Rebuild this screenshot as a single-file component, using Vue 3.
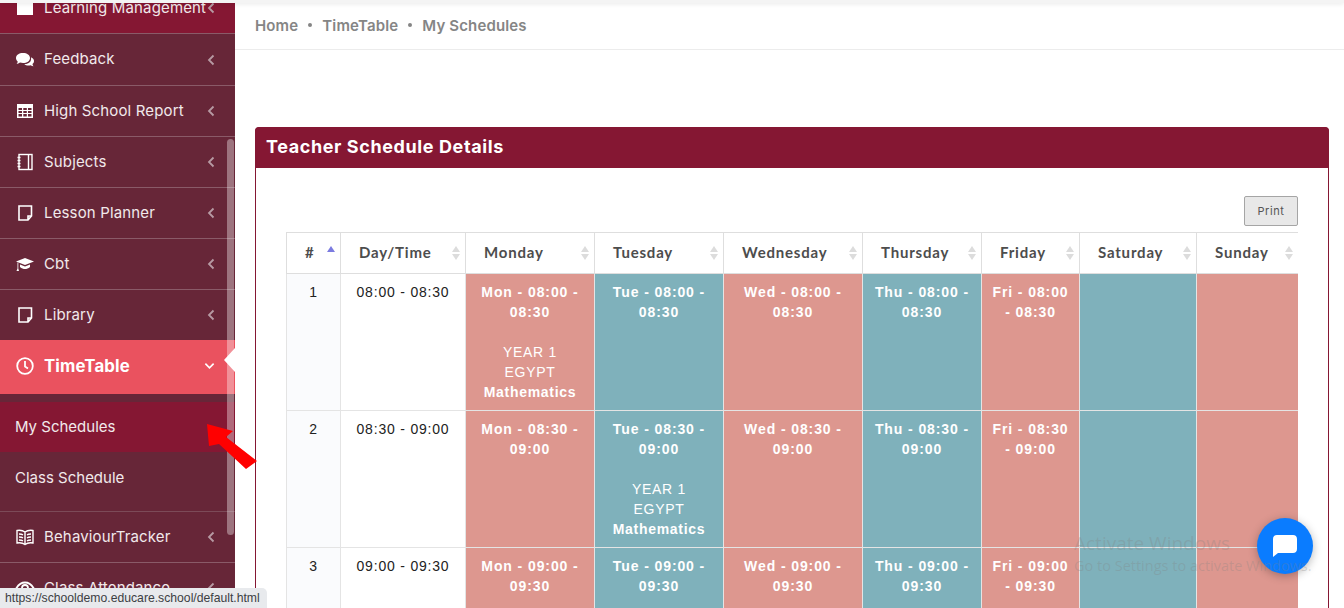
<script setup>
const menuTop = [
  { label: 'Learning Management', icon: 'square', cls: 'first' },
  { label: 'Feedback', icon: 'comments', cls: 'tall' },
  { label: 'High School Report', icon: 'table' },
  { label: 'Subjects', icon: 'notebook' },
  { label: 'Lesson Planner', icon: 'note' },
  { label: 'Cbt', icon: 'cap' },
  { label: 'Library', icon: 'note', cls: 'last' }
]
const menuBottom = [
  { label: 'BehaviourTracker', icon: 'book' },
  { label: 'Class Attendance', icon: 'eye' }
]
const days = ['Monday', 'Tuesday', 'Wednesday', 'Thursday', 'Friday', 'Saturday', 'Sunday']
const shortDays = ['Mon', 'Tue', 'Wed', 'Thu', 'Fri']
const rows = [
  { n: 1, time: '08:00 - 08:30', lesson: 0 },
  { n: 2, time: '08:30 - 09:00', lesson: 1 },
  { n: 3, time: '09:00 - 09:30', lesson: -1 }
]
</script>

<template>
  <div class="page">
    <div class="topbar"></div>
    <div class="layout">
      <aside class="sidebar">
        <ul class="menu">
          <li v-for="m in menuTop" :key="m.label" class="item" :class="m.cls">
            <svg class="ico" viewBox="0 0 20 20" fill="currentColor">
              <rect v-if="m.icon === 'square'" x="2" y="3" width="16" height="14" />
              <g v-else-if="m.icon === 'comments'">
                <path d="M8 3c4 0 7 2 7 5s-3 5-7 5c-1 0-2 0-3-.4C4 13.500 2.500 14 1.500 14c.7-.7 1.200-1.700 1.200-2.600C1.500 10.500 1 9.300 1 8c0-3 3-5 7-5z" />
                <path d="M16.500 7.500c1.600.8 2.500 2 2.500 3.500 0 1.200-.5 2.200-1.500 3 0 .9.400 1.600 1 2.300-1 0-2-.4-2.800-1-2.500.7-5 .2-6.400-1.300 4 .3 7.500-2 6.700-6.500z" />
              </g>
              <path v-else-if="m.icon === 'table'" fill-rule="evenodd" d="M2 3h16v14H2zM3.500 7v2h3.500V7zm4.800 0v2h3.500V7zm4.700 0v2h3.500V7zM3.500 10v2h3.500v-2zm4.800 0v2h3.500v-2zm4.700 0v2h3.500v-2zM3.500 13v2.500h3.500V13zm4.800 0v2.500h3.500V13zm4.700 0v2.500h3.500V13z" />
              <g v-else-if="m.icon === 'notebook'" fill="none" stroke="currentColor" stroke-width="1.400">
                <rect x="4" y="2.500" width="13" height="15" />
                <path d="M13.500 2.500v15M2.500 5.500h3M2.500 8.500h3M2.500 11.500h3M2.500 14.500h3" />
              </g>
              <path v-else-if="m.icon === 'note'" fill="none" stroke="currentColor" stroke-width="1.600" d="M4 3h12.500v10L13 17H4zM16 13h-3v3.500" />
              <g v-else-if="m.icon === 'cap'">
                <path d="M10 4 1 7.500l9 3.500 9-3.500z" />
                <path d="M5 10.500V13c1.500 1.500 3.500 2 5 2s3.500-.5 5-2v-2.500L10 12.500z" />
                <path d="M2.500 8.500v6L1.500 17h2.500l-.7-2.500v-6z" />
              </g>
            </svg>
            <span class="label">{{ m.label }}</span>
            <svg class="chev" viewBox="0 0 8 12"><path d="M6.500 1.500 2 6l4.500 4.500" /></svg>
          </li>
          <li class="item active">
            <svg class="ico" viewBox="0 0 20 20" fill="none" stroke="currentColor" stroke-width="1.800">
              <circle cx="10" cy="10" r="7.800" />
              <path d="M10 5v5.500l3 2" />
            </svg>
            <span class="label">TimeTable</span>
            <svg class="chev down" viewBox="0 0 12 8"><path d="M1.500 1.500 6 6l4.500-4.500" /></svg>
          </li>
          <li class="submenu">
            <div class="subitem current">My Schedules</div>
            <div class="subitem">Class Schedule</div>
          </li>
          <li v-for="m in menuBottom" :key="m.label" class="item">
            <svg class="ico" viewBox="0 0 20 20">
              <g v-if="m.icon === 'book'" fill="none" stroke="currentColor" stroke-width="1.400">
                <path d="M10 5C8 3.500 5 3 2 3.500v12.500c3-.5 6 0 8 1.500 2-1.500 5-2 8-1.500V3.500C15 3 12 3.500 10 5zM10 5v12.500" />
                <path d="M4 7c1.500 0 3 .2 4 .8M4 10c1.500 0 3 .2 4 .8M4 13c1.500 0 3 .2 4 .8M16 7c-1.500 0-3 .2-4 .8M16 10c-1.500 0-3 .2-4 .8M16 13c-1.500 0-3 .2-4 .8" />
              </g>
              <g v-else fill="none" stroke="currentColor" stroke-width="1.800">
                <path d="M1.500 10C4 6 7 4.500 10 4.500s6 1.500 8.500 5.500c-2.500 4-5.500 5.500-8.500 5.500S4 14 1.500 10z" />
                <circle cx="10" cy="10" r="3" />
              </g>
            </svg>
            <span class="label">{{ m.label }}</span>
            <svg class="chev" viewBox="0 0 8 12"><path d="M6.500 1.500 2 6l4.500 4.500" /></svg>
          </li>
        </ul>
        <div class="scrollbar"></div>
        <div class="notch"></div>
      </aside>

      <main class="main">
        <nav class="crumbs">
          <span>Home</span><i></i><span>TimeTable</span><i></i><span>My Schedules</span>
        </nav>
        <section class="card">
          <h2 class="card-title">Teacher Schedule Details</h2>
          <div class="card-body">
            <div class="tools"><button class="print">Print</button></div>
            <table class="schedule">
              <thead>
                <tr>
                  <th>#<span class="sort asc"></span></th>
                  <th>Day/Time<span class="sort"></span></th>
                  <th v-for="d in days" :key="d">{{ d }}<span class="sort"></span></th>
                </tr>
              </thead>
              <tbody>
                <tr v-for="r in rows" :key="r.n">
                  <td class="idx">{{ r.n }}</td>
                  <td class="time">{{ r.time }}</td>
                  <td v-for="(d, i) in days" :key="d" class="slot" :class="i % 2 ? 'teal' : 'rose'">
                    <template v-if="i < 5">
                      <b class="slot-time">{{ shortDays[i] }} - {{ r.time }}</b>
                      <div v-if="r.lesson === i" class="lesson">
                        YEAR 1<br />EGYPT<br /><b>Mathematics</b>
                      </div>
                    </template>
                  </td>
                </tr>
              </tbody>
            </table>
          </div>
        </section>
      </main>
    </div>

    <svg class="arrow" viewBox="0 0 54 50" width="54" height="50">
      <path fill="#f00" d="M2 2 28 9 21 15 52 39 41 47 14 22 4 24z" />
    </svg>
    <div class="activate">
      <div class="a1">Activate Windows</div>
      <div class="a2">Go to Settings to activate Windows.</div>
    </div>
    <div class="chat">
      <svg viewBox="0 0 28 28" width="28" height="28">
        <path fill="#fff" d="M6 3h16c2.500 0 4 1.500 4 4v10c0 2.500-1.500 4-4 4H7l-5 4V7c0-2.500 1.500-4 4-4z" />
      </svg>
    </div>
    <div class="status">https://schooldemo.educare.school/default.html</div>
  </div>
</template>

<style>
html, body {
  margin: 0;
  overflow: hidden;
  background: #fff;
}
</style>

<style scoped>
.page {
  position: relative;
  width: 1344px;
  height: 608px;
  overflow: hidden;
  font-family: "Liberation Sans", Arial, sans-serif;
  background: #fff;
}
.topbar {
  position: absolute;
  top: 0;
  left: 0;
  right: 0;
  height: 3px;
  background: #f4f4f4;
  box-shadow: 0 1px 4px rgba(0, 0, 0, .1);
  z-index: 5;
}
.layout {
  display: flex;
  height: 608px;
}

/* sidebar */
.sidebar {
  position: relative;
  width: 235px;
  flex: none;
  background: #672638;
  overflow: hidden;
}
.menu {
  list-style: none;
  margin: -17px 0 0;
  padding: 0;
  font-family: "Inter", "Open Sans", sans-serif;
  color: #f1e9eb;
}
.item {
  display: flex;
  align-items: center;
  height: 50px;
  padding: 0 20px 0 15px;
  border-bottom: 1px solid #8a5a68;
  font-size: 15px;
  letter-spacing: .15px;
}
.item.first {
  background: #851733;
}
.item.tall {
  height: 51px;
}
.item.last {
  border-bottom: 0;
}
.ico {
  width: 20px;
  height: 20px;
  margin-right: 9px;
  flex: none;
  color: #fff;
}
.label {
  flex: 1;
  margin-bottom: 2px;
  white-space: nowrap;
}
.chev {
  width: 8px;
  height: 12px;
  flex: none;
  fill: none;
  stroke: #b79aa3;
  stroke-width: 1.800;
}
.item.active {
  height: 52px;
  padding-bottom: 2px;
  background: #ea525f;
  border-bottom: 0;
  font-size: 16.800px;
  font-weight: 700;
  color: #fff;
}
.item.active .label {
  margin-bottom: 0;
}
.chev.down {
  width: 11px;
  height: 8px;
  stroke: #fff;
}
.submenu {
  padding-top: 8px;
  border-bottom: 1px solid #7c4a58;
}
.subitem {
  height: 50px;
  line-height: 50px;
  padding-left: 15px;
  font-size: 15px;
}
.subitem + .subitem {
  height: 59px;
  line-height: 52px;
}
.subitem.current {
  background: #851733;
}
.scrollbar {
  position: absolute;
  left: 227px;
  top: 139px;
  width: 7px;
  height: 396px;
  border-radius: 4px;
  background: rgba(255, 255, 255, .36);
}
.notch {
  position: absolute;
  left: 224px;
  top: 348px;
  border-top: 12px solid transparent;
  border-bottom: 12px solid transparent;
  border-right: 11px solid #fff;
}
.arrow {
  position: absolute;
  left: 205px;
  top: 422px;
  z-index: 3;
}

/* main */
.main {
  flex: 1;
  min-width: 0;
}
.crumbs {
  display: flex;
  align-items: center;
  height: 44px;
  margin-top: 3px;
  padding: 0 0 2px 20px;
  border-bottom: 1px solid #ececec;
  font-family: "Inter", "Open Sans", sans-serif;
  font-size: 15px;
  font-weight: 600;
  letter-spacing: .15px;
  color: #858585;
}
.crumbs i {
  width: 4px;
  height: 4px;
  margin: 0 10px;
  border-radius: 50%;
  background: #858585;
}
.card {
  margin: 77px 15px 0 20px;
  border: 1px solid #851733;
  border-radius: 4px 4px 0 0;
}
.card-title {
  height: 41px;
  margin: -1px -1px 0;
  padding-left: 11px;
  background: #851733;
  border-radius: 4px 4px 0 0;
  color: #fff;
  font-family: "Inter", "Open Sans", sans-serif;
  font-size: 18px;
  font-weight: 700;
  letter-spacing: .6px;
  line-height: 39px;
}
.card-body {
  padding: 28px 30px 0;
}
.tools {
  display: flex;
  justify-content: flex-end;
  margin-bottom: 6px;
}
.print {
  width: 54px;
  height: 30px;
  padding: 0;
  border: 1px solid #a5a5a5;
  border-radius: 2px;
  background: #e8e8e8;
  color: #555;
  font-family: "Inter", sans-serif;
  font-size: 11px;
  letter-spacing: .6px;
}

/* table */
.schedule {
  width: 1011px;
  table-layout: fixed;
  border-collapse: collapse;
  border-top: 1px solid #dedede;
}
.schedule th:nth-child(1) { width: 54px; }
.schedule th:nth-child(2) { width: 125px; }
.schedule th:nth-child(3) { width: 129px; }
.schedule th:nth-child(4) { width: 129px; }
.schedule th:nth-child(5) { width: 139px; }
.schedule th:nth-child(6) { width: 119px; }
.schedule th:nth-child(7) { width: 98px; }
.schedule th:nth-child(8) { width: 117px; }
.schedule th:nth-child(9) { width: 101px; }
.schedule th {
  position: relative;
  box-sizing: border-box;
  height: 41px;
  padding: 0 0 2px 18px;
  border: 1px solid #dedede;
  border-top: 0;
  color: #4d4d4d;
  font-family: "Lato", sans-serif;
  font-size: 15px;
  font-weight: 700;
  letter-spacing: .8px;
  text-align: left;
}
.schedule th:last-child {
  border-right: 0;
}
.sort {
  position: absolute;
  right: 5px;
  top: 13px;
  width: 0;
  height: 0;
  border-left: 4px solid transparent;
  border-right: 4px solid transparent;
  border-bottom: 6px solid #dcdcdc;
}
.sort::after {
  content: "";
  position: absolute;
  left: -4px;
  top: 8px;
  border-left: 4px solid transparent;
  border-right: 4px solid transparent;
  border-top: 6px solid #dcdcdc;
}
.sort.asc {
  border-bottom-color: #7b7be0;
}
.sort.asc::after {
  display: none;
}
.schedule td {
  box-sizing: border-box;
  height: 137px;
  padding: 8px 8px 0;
  border: 1px solid #e4e4e4;
  vertical-align: top;
  text-align: center;
  font-size: 14px;
  line-height: 20px;
  letter-spacing: .8px;
}
.schedule td:last-child {
  border-right: 0;
}
.idx {
  background: #fafbfd;
  color: #222;
}
.time {
  color: #222;
}
.slot {
  color: #fff;
}
.slot-time {
  letter-spacing: .9px;
}
.rose {
  background: #dd978f;
}
.teal {
  background: #7fb1bb;
}
.lesson {
  margin-top: 20px;
  letter-spacing: .7px;
}

/* overlays */
.activate {
  position: absolute;
  left: 1074px;
  top: 530px;
  color: rgba(130, 130, 130, .28);
  font-family: "Open Sans", sans-serif;
  white-space: nowrap;
  pointer-events: none;
  z-index: 3;
}
.a1 {
  font-size: 19px;
  line-height: 26px;
}
.a2 {
  font-size: 14.500px;
  line-height: 20px;
}
.chat {
  position: absolute;
  left: 1257px;
  top: 518px;
  width: 56px;
  height: 56px;
  display: flex;
  align-items: center;
  justify-content: center;
  border-radius: 50%;
  background: #0a7cff;
  box-shadow: 0 2px 10px rgba(0, 0, 0, .28);
  z-index: 2;
}
.status {
  position: absolute;
  left: 0;
  bottom: 0;
  height: 20px;
  padding: 0 7px 0 5px;
  background: #e8eaed;
  border-top-right-radius: 5px;
  color: #3c4043;
  font-family: "Liberation Sans", sans-serif;
  font-size: 12.200px;
  line-height: 20px;
  z-index: 6;
}
</style>
